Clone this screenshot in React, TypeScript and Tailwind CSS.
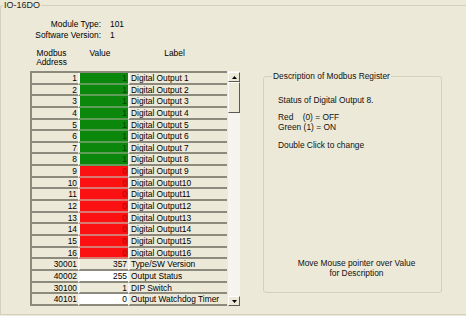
const rows = [
  ...Array.from({ length: 16 }, (_, i) => ({
    addr: String(i + 1),
    value: i < 8 ? '1' : '0',
    label: i < 9 ? `Digital Output ${i + 1}` : `Digital Output${i + 1}`,
    kind: i < 8 ? 'on' : 'off',
  })),
  { addr: '30001', value: '357', label: 'Type/SW Version', kind: 'ro' },
  { addr: '40002', value: '255', label: 'Output Status', kind: 'rw' },
  { addr: '30100', value: '1', label: 'DIP Switch', kind: 'ro' },
  { addr: '40101', value: '0', label: 'Output Watchdog Timer', kind: 'rw' },
];

const valueStyles: Record<string, string> = {
  on: 'bg-[#0b880b] text-[#063d06] border-b-[#5f9d58]',
  off: 'bg-[#fb1111] text-[#b30000] border-b-[#d77a72]',
  ro: 'bg-[#ece9d8] text-black border-b-[#8c8a7c]',
  rw: 'bg-white text-black border-b-[#8c8a7c]',
};

function ScrollButton({ down }: { down?: boolean }) {
  return (
    <div className="h-[10px] w-[12px] flex items-center justify-center bg-[#ece9d8] border border-t-white border-l-white border-r-[#5a5a52] border-b-[#5a5a52]">
      <svg width="5" height="3" viewBox="0 0 5 3">
        {down ? <path d="M0 0h5L2.5 3z" fill="#000" /> : <path d="M0 3h5L2.5 0z" fill="#000" />}
      </svg>
    </div>
  );
}

export default function App() {
  return (
    <div className="w-[466px] h-[316px] overflow-hidden bg-[#ece9d8] text-black text-[8.4px] font-['Liberation_Sans',Arial,sans-serif]">
      <fieldset className="h-[315px] border border-r-0 border-[#d3d0bd] rounded-tl-[3px]">
        <legend className="ml-[2px] px-[1px] leading-[10px] text-[9px] text-[#222]">IO-16DO</legend>

        {/* module info */}
        <div className="mt-[9px] grid grid-cols-[100px_auto] gap-x-[9px] leading-[11px]">
          <span className="text-right">Module Type:</span>
          <span>101</span>
          <span className="text-right">Software Version:</span>
          <span>1</span>
        </div>

        {/* column headers */}
        <div className="mt-[8px] ml-[29px] flex leading-[8.5px]">
          <div className="w-[48px] pr-[5px] text-center">
            Modbus
            <br />
            Address
          </div>
          <div className="w-[50px] pr-[6px] text-center">Value</div>
          <div className="w-[99px] pr-[6px] text-center">Label</div>
        </div>

        <div className="mt-[5px] flex">
          {/* register table */}
          <div className="ml-[29px] flex">
            <div className="border-t-2 border-[#8c8a7c]">
              {rows.map((r) => (
                <div key={r.addr} className="flex h-[11.65px] leading-[10px]">
                  <div className="w-[48px] pr-[1px] text-right bg-[#ece9d8] border-l-2 border-b-2 border-[#8c8a7c]">
                    {r.addr}
                  </div>
                  <div
                    className={`w-[50px] pr-[1px] text-right border-b-2 border-l-2 border-l-[#f6f5f0] ${valueStyles[r.kind]}`}
                  >
                    {r.value}
                  </div>
                  <div className="w-[99px] pl-[1px] bg-[#ece9d8] border-b-2 border-l-2 border-l-[#f6f5f0] border-b-[#8c8a7c] whitespace-nowrap overflow-hidden">
                    {r.label}
                  </div>
                </div>
              ))}
            </div>

            {/* scrollbar */}
            <div className="ml-[1px] w-[12px] h-[235px] pt-[1px] flex flex-col bg-[#f5f4ef]">
              <ScrollButton />
              <div className="h-[31px] bg-[#ece9d8] border border-t-white border-l-white border-r-[#5a5a52] border-b-[#5a5a52]" />
              <div className="flex-1" />
              <ScrollButton down />
            </div>
          </div>

          {/* description */}
          <fieldset className="ml-[23px] w-[179px] h-[222px] flex flex-col border border-[#d3d0bd] rounded-[3px] leading-[10px] text-[#111]">
            <legend className="ml-[8px] px-[1px]">Description of Modbus Register</legend>
            <div className="pl-[14px] mt-[14px] flex flex-col">
              <span>Status of Digital Output 8.</span>
              <span className="mt-[7px] whitespace-pre">Red    (0) = OFF</span>
              <span>Green (1) = ON</span>
              <span className="mt-[8px]">Double Click to change</span>
            </div>
            <div className="mt-auto mb-[14px] pl-[8px] text-center leading-[10px]">
              Move Mouse pointer over Value
              <br />
              for Description
            </div>
          </fieldset>
        </div>
      </fieldset>
    </div>
  );
}
